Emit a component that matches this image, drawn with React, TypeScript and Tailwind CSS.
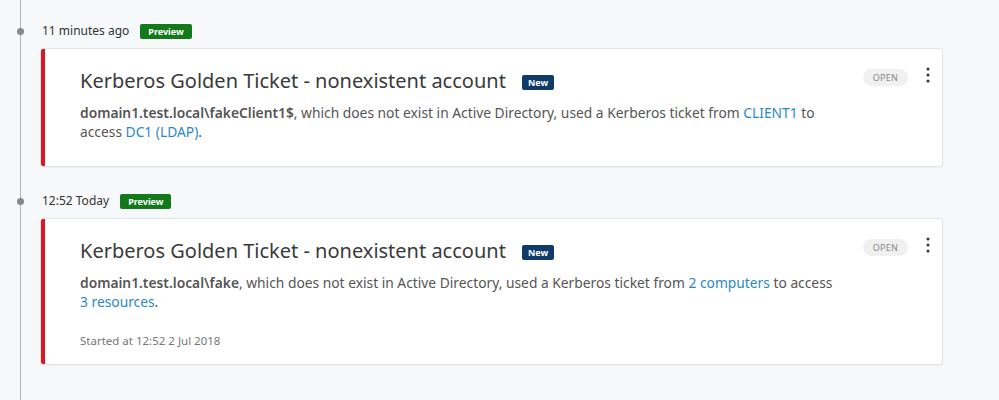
import { ReactNode } from "react";

interface Alerta {
  quando: string;
  titulo: string;
  descricao: ReactNode;
  rodape?: string;
}

const Link = ({ children }: { children: ReactNode }) => (
  <span className="text-[#2b88c8]">{children}</span>
);

const alertas: Alerta[] = [
  {
    quando: "11 minutes ago",
    titulo: "Kerberos Golden Ticket - nonexistent account",
    descricao: (
      <>
        <span className="font-semibold">domain1.test.local\fakeClient1$</span>, which does not exist in
        Active Directory, used a Kerberos ticket from <Link>CLIENT1</Link> to access <Link>DC1 (LDAP)</Link>.
      </>
    ),
  },
  {
    quando: "12:52 Today",
    titulo: "Kerberos Golden Ticket - nonexistent account",
    descricao: (
      <>
        <span className="font-semibold">domain1.test.local\fake</span>, which does not exist in Active
        Directory, used a Kerberos ticket from <Link>2 computers</Link> to access <Link>3 resources</Link>.
      </>
    ),
    rodape: "Started at 12:52 2 Jul 2018",
  },
];

function Cartao({ a }: { a: Alerta }) {
  return (
    <div className="flex rounded-[3px] border border-[#e3e4e6] bg-white shadow-[0_1px_1px_rgba(0,0,0,0.04)]">
      <div className="w-[4px] shrink-0 rounded-l-[2px] bg-[#d71926]" />
      <div
        className={
          a.rodape
            ? "flex flex-1 items-start pl-[35px] pr-[12px] pt-[17px] pb-[15px]"
            : "flex flex-1 items-start pl-[35px] pr-[12px] pt-[17px] pb-[25px]"
        }
      >
        <div className="flex-1">
          <div className="flex items-center gap-[16px]">
            <h2 className="text-[20px] font-normal leading-[30px] text-[#3a3a3a]">{a.titulo}</h2>
            <span className="mt-[3px] rounded-[2px] bg-[#0f3b6b] px-[6px] text-[9px] font-bold leading-[15px] text-white">
              New
            </span>
          </div>
          <p className="mt-[7px] max-w-[758px] text-[13.8px] leading-[19px] text-[#555]">{a.descricao}</p>
          {a.rodape && <p className="mt-[22px] text-[11.5px] leading-[16px] text-[#777]">{a.rodape}</p>}
        </div>
        <div className="flex items-start gap-[18px] pt-[3px]">
          <span className="rounded-full bg-[#f0f0f0] px-[10px] text-[9px] leading-[17px] tracking-wide text-[#888]">
            OPEN
          </span>
          <svg width="4" height="16" viewBox="0 0 4 16" className="mt-[-2px]">
            <circle cx="2" cy="2" r="1.5" fill="#333" />
            <circle cx="2" cy="8" r="1.5" fill="#333" />
            <circle cx="2" cy="14" r="1.5" fill="#333" />
          </svg>
        </div>
      </div>
    </div>
  );
}

export default function App() {
  return (
    <div
      className="min-h-[400px] bg-[#f7f8fa] pl-[20px]"
      style={{ fontFamily: '"Noto Sans", "Open Sans", sans-serif' }}
    >
      <div className="flex min-h-[400px] flex-col gap-[25px] border-l border-[#b5b5b5] pt-[22px] pr-[56px]">
        {alertas.map((a, i) => (
          <div key={i} className="flex flex-col">
            <div className="relative flex h-[18px] items-center gap-[11px] pl-[21px]">
              <span className="absolute left-[-4px] top-[6px] h-[7px] w-[7px] rounded-full bg-[#888]" />
              <span className="text-[12px] text-[#333]">{a.quando}</span>
              <span className="rounded-[2px] bg-[#127a1a] px-[8px] text-[9px] font-bold leading-[15px] text-white">
                Preview
              </span>
            </div>
            <div className="mt-[8px] pl-[19px]">
              <Cartao a={a} />
            </div>
          </div>
        ))}
      </div>
    </div>
  );
}
